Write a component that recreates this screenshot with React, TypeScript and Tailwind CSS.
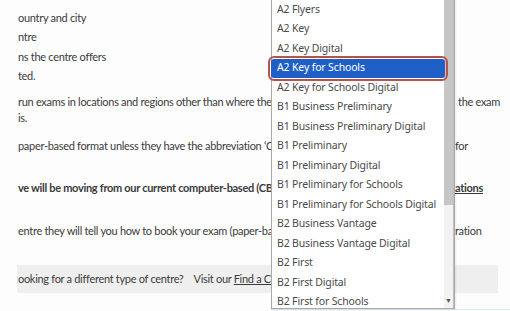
import React from 'react';

const exams = [
  'A2 Flyers',
  'A2 Key',
  'A2 Key Digital',
  'A2 Key for Schools',
  'A2 Key for Schools Digital',
  'B1 Business Preliminary',
  'B1 Business Preliminary Digital',
  'B1 Preliminary',
  'B1 Preliminary Digital',
  'B1 Preliminary for Schools',
  'B1 Preliminary for Schools Digital',
  'B2 Business Vantage',
  'B2 Business Vantage Digital',
  'B2 First',
  'B2 First Digital',
  'B2 First for Schools',
];

// left part is cut where the open select sits, right part shows past it
function Line({ left, right, className = '' }: { left: React.ReactNode; right?: React.ReactNode; className?: string }) {
  return (
    <div className={`flex whitespace-nowrap ${className}`}>
      <div className="w-[253px] shrink-0 overflow-hidden">{left}</div>
      <div className="w-[184px] shrink-0" />
      <div>{right}</div>
    </div>
  );
}

function ExamDropdown() {
  return (
    <div className="absolute left-[271px] top-[-2px] flex h-[311px] w-[184px] border-x border-b border-[#a9a9a9] bg-white font-['Noto_Sans',sans-serif] text-[10.5px] tracking-[-0.15px] text-[#4a4a4a] shadow-[1px_1px_2px_rgba(0,0,0,0.08)]">
      <ul className="flex-1 pt-[2px]">
        {exams.map((name) => {
          const selected = name === 'A2 Key for Schools';
          return (
            <li
              key={name}
              className={`flex h-[19.5px] items-center whitespace-nowrap pl-[5px] ${
                selected
                  ? 'relative z-10 -mx-[1px] rounded-[3px] bg-[#1f5fc6] pl-[6px] text-white outline-2 outline-offset-[1px] outline-[#b8534c]'
                  : ''
              }`}
            >
              {name}
            </li>
          );
        })}
      </ul>
      <div className="flex w-[10px] flex-col border-r border-[#bdbdbd] bg-[#f2f2f2]">
        <div className="h-[207px] bg-[#c6c6c6]" />
        <div className="flex-1" />
        <div className="mb-[4px] flex justify-center text-[7px] leading-none text-[#555]">▼</div>
      </div>
    </div>
  );
}

export default function App() {
  return (
    <div className="relative h-[311px] w-[510px] overflow-hidden bg-[#fdfdfd] font-['Lato',sans-serif] text-[11px] tracking-[-0.3px] text-[#3b3b3b]">
      <div className="pl-[18px] pt-[8px]">
        <ul className="flex flex-col">
          <Line className="h-[19.5px] items-center" left="ountry and city" />
          <Line className="h-[19.5px] items-center" left="ntre" />
          <Line className="h-[19.5px] items-center" left="ns the centre offers" />
          <Line className="h-[19.5px] items-center" left="ted." />
        </ul>

        <div className="mt-[8px] leading-[16px]">
          <Line
            left="run exams in locations and regions other than where the centre"
            right={<span className="pl-[3px]">the exam</span>}
          />
          <Line left="is." />
        </div>

        <div className="mt-[12px] leading-[16px]">
          <Line left="paper-based format unless they have the abbreviation ‘CB’" right="for" />
        </div>

        <div className="mt-[26px] font-bold leading-[16px]">
          <Line
            left="ve will be moving from our current computer-based (CB) exams"
            right={<span className="underline">ations</span>}
          />
        </div>

        <div className="mt-[27px] leading-[16px]">
          <Line left="entre they will tell you how to book your exam (paper-based" right="ration" />
        </div>

        <div className="mt-[26px] -ml-[1px] flex h-[28px] w-[481px] items-center bg-[#efefef] pl-[1px]">
          <div className="w-[253px] overflow-hidden whitespace-nowrap">
            <span>ooking for a different type of centre?</span>
            <span className="ml-[10px]">
              Visit our <span className="underline">Find a Centre</span>
            </span>
          </div>
        </div>
        <div className="mt-[16px] ml-[252px] h-[1px] bg-[#d6f0f7]" />
      </div>

      <ExamDropdown />
    </div>
  );
}
